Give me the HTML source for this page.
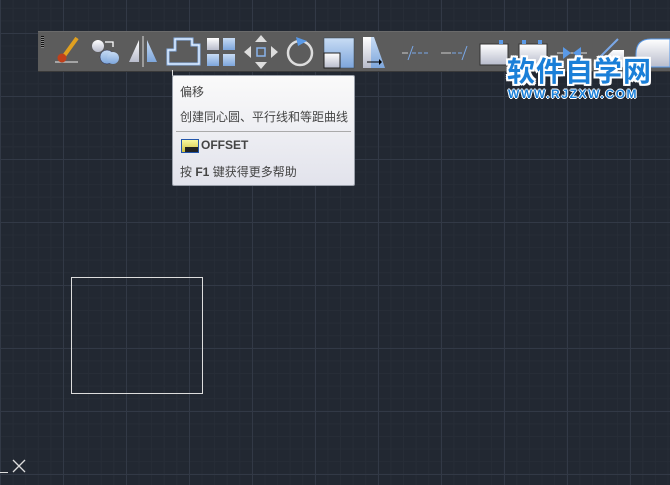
<!DOCTYPE html>
<html><head><meta charset="utf-8"><style>
body{margin:0;width:670px;height:485px;overflow:hidden;position:relative;background:#222832;
font-family:"Liberation Sans","Noto Sans CJK SC",sans-serif;}
.grid{position:absolute;inset:0;
background-image:
linear-gradient(to right,#323946 1px,transparent 1px),
linear-gradient(to bottom,#323946 1px,transparent 1px),
linear-gradient(to right,#272d37 1px,transparent 1px),
linear-gradient(to bottom,#272d37 1px,transparent 1px);
background-size:63px 63px,63px 63px,12.6px 12.6px,12.6px 12.6px;
background-position:0 0,0 33px,0 0,0 7.8px;}
.tb{position:absolute;left:38px;top:31px;width:632px;height:39px;background:#5c5c5c;border-top:1px solid #6a6a6a;border-bottom:1px solid #3a3a3a;}
.grip{position:absolute;left:3px;top:4px;width:3px;height:12px;background:repeating-linear-gradient(#111 0 1px,#888 1px 2px);}
.tip{position:absolute;left:172px;top:75px;width:181px;height:109px;background:linear-gradient(#fafafa,#e2e3ec);border:1px solid #9aa0aa;border-radius:2px;font-size:12px;color:#444;}
.wm{position:absolute;left:507px;top:55px;font-size:28px;font-weight:bold;color:#1a7fd8;font-family:"Noto Sans CJK SC",sans-serif;letter-spacing:1px;
text-shadow:2px 0 #fff,-2px 0 #fff,0 2px #fff,0 -2px #fff,2px 2px #fff,-2px -2px #fff,2px -2px #fff,-2px 2px #fff;line-height:30px;}
.wm2{position:absolute;left:508px;top:87px;font-size:12px;font-weight:bold;color:#1a7fd8;letter-spacing:1.6px;
text-shadow:1px 0 #fff,-1px 0 #fff,0 1px #fff,0 -1px #fff;}
</style></head><body>
<div class="grid"></div>
<div class="tb"><div class="grip"></div>
<svg width="632" height="39" style="position:absolute;left:0;top:0">
<defs><linearGradient id="g" x1="0" y1="0" x2="0" y2="1"><stop offset="0" stop-color="#fff"/><stop offset="1" stop-color="#b8bccc"/></linearGradient>
<linearGradient id="b" x1="0" y1="0" x2="0" y2="1"><stop offset="0" stop-color="#c8dcf4"/><stop offset="1" stop-color="#7da6dc"/></linearGradient></defs>
<line x1="17" y1="30" x2="40" y2="30" stroke="#bbb" stroke-width="1.5"/>
<line x1="26" y1="24" x2="39" y2="6" stroke="#e0a020" stroke-width="4"/>
<circle cx="24" cy="26" r="4.5" fill="#c0401a"/>
<circle cx="60" cy="14" r="6" fill="url(#g)"/><circle cx="69" cy="25" r="7" fill="url(#b)" stroke="#224" stroke-width=".5"/><circle cx="75" cy="26" r="6" fill="url(#b)"/>
<path d="M67 10h8v5" stroke="#fff" fill="none" stroke-width="1.3"/>
<path d="M91 30l10-22v22z" fill="url(#g)"/><line x1="105" y1="4" x2="105" y2="35" stroke="#ddd"/><path d="M109 30v-22l10 22z" fill="url(#b)"/>
<path d="M130 32v-14h7v-11h17v6h7v19z" fill="none" stroke="#8ab4ec" stroke-width="3"/><path d="M130 32v-14h7v-11h17v6h7v19z" fill="none" stroke="#fff" stroke-width="1"/>
<rect x="169" y="6" width="12" height="12" fill="url(#g)"/><rect x="185" y="6" width="12" height="12" fill="url(#b)"/><rect x="169" y="22" width="12" height="12" fill="url(#b)"/><rect x="185" y="22" width="12" height="12" fill="url(#b)"/>
<path d="M223 3l6 7h-12zM223 37l6-7h-12zM206 20l7-6v12zM240 20l-7-6v12z" fill="#ddd"/><rect x="219" y="16" width="8" height="8" fill="none" stroke="#8ab4ec" stroke-width="1.5"/>
<circle cx="262" cy="21" r="12" fill="none" stroke="#ddd" stroke-width="2.5"/><path d="M258 5l11 4-9 5z" fill="#5a9ae8"/>
<rect x="286" y="6" width="30" height="30" fill="url(#b)" stroke="#345" stroke-width=".5"/><rect x="286" y="21" width="16" height="15" fill="url(#g)" stroke="#222"/>
<path d="M325 5h11l11 31h-22z" fill="url(#b)"/><path d="M325 5h8v31h-8z" fill="url(#g)"/><path d="M329 30h14" stroke="#000"/><path d="M341 27l3 3-3 3" fill="#000"/>
<path d="M364 21h6" stroke="#ccc"/><path d="M374 21h16" stroke="#7aa8e8" stroke-dasharray="4 2"/><path d="M370 28l5-14" stroke="#7aa8e8"/>
<path d="M403 21h10" stroke="#ccc"/><path d="M414 21h10" stroke="#7aa8e8" stroke-dasharray="4 2"/><path d="M424 28l5-14" stroke="#7aa8e8"/>
<rect x="442" y="12" width="28" height="21" fill="url(#g)" stroke="#333"/><rect x="461" y="8" width="4" height="4" fill="#5a9ae8"/>
<rect x="481" y="12" width="28" height="21" fill="url(#g)" stroke="#333"/><rect x="484" y="8" width="4" height="4" fill="#5a9ae8"/><rect x="500" y="8" width="4" height="4" fill="#5a9ae8"/>
<path d="M519 21h30" stroke="#ddd"/><path d="M525 15l8 6-8 6zM543 15l-8 6 8 6z" fill="#5a9ae8"/>
<path d="M558 35l17-17h11v17z" fill="url(#g)"/><path d="M558 29l22-22" stroke="#7aa8e8" stroke-width="2"/>
<path d="M598 35v-13q0-15 15-15h19v28z" fill="url(#g)" stroke="#5a9ae8"/>
</svg></div>
<div style="position:absolute;left:172px;top:70px;width:1px;height:6px;background:#ddd"></div>
<div class="tip">
<div style="position:absolute;left:7px;top:7px">偏移</div>
<div style="position:absolute;left:7px;top:32px;white-space:nowrap">创建同心圆、平行线和等距曲线</div>
<div style="position:absolute;left:3px;top:55px;width:175px;height:1px;background:#aaa"></div>
<div style="position:absolute;left:8px;top:63px;width:16px;height:12px;background:linear-gradient(#f8f8a0,#d0c040);border:1px solid #2255aa"><div style="position:absolute;left:3px;bottom:0;width:13px;height:5px;background:#222"></div></div>
<div style="position:absolute;left:28px;top:62px;font-weight:bold">OFFSET</div>
<div style="position:absolute;left:7px;top:87px">按 <b>F1</b> 键获得更多帮助</div>
</div>
<div class="wm">软件自学网</div>
<div class="wm2">WWW.RJZXW.COM</div>
<div style="position:absolute;left:71px;top:277px;width:130px;height:115px;border:1.5px solid #ddd"></div>
<div style="position:absolute;left:0;top:472px;width:8px;height:1px;background:#ddd"></div>
<svg style="position:absolute;left:12px;top:459px" width="14" height="14"><path d="M1 1l12 12M13 1L1 13" stroke="#ddd" stroke-width="1.3"/></svg>
</body></html>
